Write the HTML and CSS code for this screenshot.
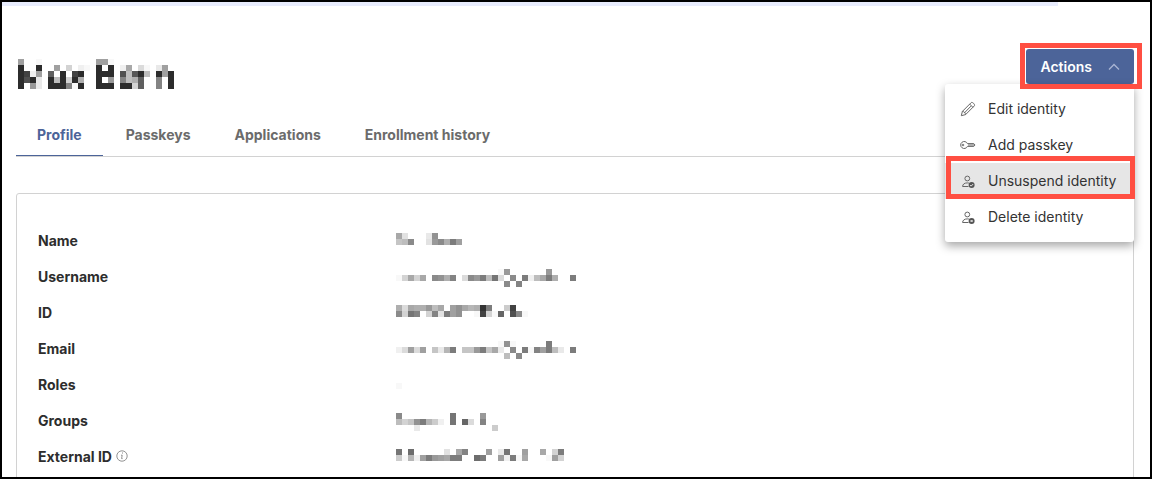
FILE: index.html
```html
<!DOCTYPE html>
<html lang="en">
<head>
<meta charset="utf-8">
<title>Identity profile</title>
<link rel="stylesheet" href="styles.css">
</head>
<body>
<div class="frame">
  <div class="strip"></div>
  <main class="page">
    <header class="head">
      <h1 class="title"><svg class="mosaic" role="img" aria-label="Redacted name" data-rows="mzzyzzzzzzzzzmmyzzzzzzzzzz 6zz6zzmztzxyz6z6zxnzuyzwmz 69xmzdz6z96zz666zbqc6qz6m6 6b6wz6q6t6ozz6zlziqodzziz6 6zlwz666iy6zz666z66tdzziz6"></svg></h1>
      <div class="actions">
        <button class="actions-button" type="button" aria-expanded="true" aria-controls="actions-menu">Actions
          <svg width="12" height="8" viewBox="0 0 12 8" fill="none" stroke="#a9b5d4" stroke-width="1.3"><path d="M1 6.5 6 1.5l5 5"/></svg>
        </button>
        <div class="menu" id="actions-menu">
          <button class="item" type="button">
            <svg width="16" height="16" viewBox="0 0 16 16" fill="none" stroke="#666" stroke-width="1"><path d="M1.3 14.7l1.1-4.3 8.7-8.7c1.2-1.2 4.4 1.9 3.2 3.2l-8.7 8.7zM2.4 10.4c1.8.2 3 1.4 3.2 3.2M9.7 3.1l3.2 3.2M4.3 12l6.7-6.9"/></svg>
            Edit identity</button>
          <button class="item" type="button">
            <svg width="16" height="16" viewBox="0 0 16 16" fill="none" stroke="#666" stroke-width="1"><path d="M7.4 6.6h6.4l1.2 1.4-1.2 1.4H7.4a3.5 3.5 0 1 1 0-2.8zM8 8h6"/><circle cx="3" cy="8" r=".8"/></svg>
            Add passkey</button>
          <button class="item item-current" type="button">
            <svg width="16" height="16" viewBox="0 0 16 16" fill="none" stroke="#666" stroke-width="1"><circle cx="7.3" cy="5.5" r="2.4"/><path d="M8.500 13.500H2.600c0-2.200 1.800-3.600 4.700-3.600 .8 0 1.400.1 2 .3"/><circle cx="11.600" cy="12" r="3" fill="#555" stroke="none"/><path d="M10.200 12.100l1 1 1.900-2" stroke="#fff" stroke-width=".9"/></svg>
            Unsuspend identity</button>
          <button class="item" type="button">
            <svg width="16" height="16" viewBox="0 0 16 16" fill="none" stroke="#666" stroke-width="1"><circle cx="7.3" cy="5.5" r="2.4"/><path d="M8.500 13.500H2.600c0-2.200 1.800-3.600 4.700-3.600 .8 0 1.400.1 2 .3"/><circle cx="11.600" cy="12" r="3" fill="#555" stroke="none"/><path d="M10.600 11l2 2m0-2l-2 2" stroke="#fff" stroke-width=".9"/></svg>
            Delete identity</button>
        </div>
      </div>
    </header>
    <nav class="tabs">
      <a class="tab tab-current" href="#profile">Profile</a>
      <a class="tab" href="#passkeys">Passkeys</a>
      <a class="tab" href="#applications">Applications</a>
      <a class="tab" href="#history">Enrollment history</a>
    </nav>
    <section class="card" id="profile">
      <dl class="fields">
        <dt>Name</dt>
        <dd><svg class="mosaic" role="img" aria-label="Redacted" data-rows="nvzzzwkzzzz rqjzzvljohm"></svg></dd>
        <dt>Username</dt>
        <dd><svg class="mosaic" role="img" aria-label="Redacted" data-rows="zzzzzzzzzzzzzzzzzylzzzzzzlzzzz ytntnzjkoizujlhqguzjzhxqnhozzh zzzzzzzzzzzzzzzzzzjzizzzzzzzzz"></svg></dd>
        <dt>ID</dt>
        <dd><svg class="mosaic" role="img" aria-label="Redacted" data-rows="ounoolqnzmknpo7hzzs9zz jtgiztivhmkzzy9tyezbjy"></svg></dd>
        <dt>Email</dt>
        <dd><svg class="mosaic" role="img" aria-label="Redacted" data-rows="zzzzzzzzzzzzzzzzzykyzzzzzhzzzz xumumzrwphzrrlhrnwzjzhyimhqwzh zzzzzzzzzzzzzzzzzzqzjzzzzzzzzz"></svg></dd>
        <dt>Roles</dt>
        <dd><svg class="mosaic" role="img" aria-label="Redacted" data-rows="z y"></svg></dd>
        <dt>Groups</dt>
        <dd><svg class="mosaic" role="img" aria-label="Redacted" data-rows="jzzzzzzzzgzzzzlzzz qtrkhpsxzgzeuzizzz zzzwzzzzzzzzzzzzsz"></svg></dd>
        <dt>External ID
          <svg width="12" height="12" viewBox="0 0 12 12" fill="none" stroke="#777" stroke-width=".8"><circle cx="6" cy="6" r="5.200"/><path d="M5 5.200h1.200L5.600 8.600h1"/><path d="M6 3h.9" stroke-width="1"/></svg></dt>
        <dd><svg class="mosaic" role="img" aria-label="Redacted" data-rows="gzfzzzzzvznizzzmzwgzzmzznzth sypxmhlmnhhzzfhzzmxhynzzzymtz"></svg></dd>
      </dl>
    </section>
  </main>
</div>
<script src="mosaic.js"></script>
</body>
</html>
```

FILE: styles.css
```css
* { box-sizing: border-box; }

body {
  margin: 0;
  font-family: Inter, "Liberation Sans", sans-serif;
  font-size: 14px;
  color: #2d2d2d;
  background: #fff;
}

.frame {
  height: 100vh;
  border: 2px solid #000;
  overflow: hidden;
}

.strip { width: 92%; height: 4px; background: #e8ecfd; }

.page { padding: 43px 16px 0 14px; }

.head {
  display: flex;
  justify-content: space-between;
  align-items: flex-start;
}

.title { margin: 10px 0 0 2px; line-height: 0; }

.mosaic { display: block; shape-rendering: crispEdges; }

.actions { position: relative; }

.actions-button {
  display: flex;
  align-items: center;
  gap: 16px;
  height: 35px;
  padding: 0 14px;
  border: 0;
  border-radius: 3px;
  background: #4c6499;
  color: #fff;
  font: 600 14px/20px Inter, sans-serif;
}

.actions::after,
.item-current::after {
  content: "";
  position: absolute;
  z-index: 3;
  border: 5px solid #ff4f42;
  pointer-events: none;
}

.actions::after { inset: -6px -8px -5px -6px; }

.menu {
  position: absolute;
  z-index: 2;
  top: 35px;
  right: 0;
  width: 189px;
  padding: 7px 0;
  border-radius: 3px;
  background: #fff;
  box-shadow: 0 4px 10px rgba(0, 0, 0, .35);
}

.item {
  position: relative;
  display: flex;
  align-items: center;
  gap: 12px;
  width: 100%;
  height: 36px;
  padding: 0 0 0 15px;
  border: 0;
  background: none;
  color: #333;
  font: 400 14px/20px Inter, sans-serif;
  white-space: nowrap;
}

.item-current { background: #e6e6e6; }
.item-current::after { inset: -7px -1px 0 1px; }

.tabs {
  display: flex;
  gap: 2px;
  margin-top: 24px;
  border-bottom: 1px solid #d2d2d2;
}

.tab {
  padding: 12px 21px 10px;
  border-bottom: 1px solid transparent;
  color: #6b6b6b;
  font-weight: 700;
  line-height: 20px;
  text-decoration: none;
}

.tab-current { color: #4c6499; border-color: #4c6499; }

.card {
  margin-top: 36px;
  padding: 28px 21px;
  border: 1px solid #d2d2d2;
  border-radius: 3px;
}

.fields {
  display: grid;
  grid-template-columns: 358px 1fr;
  grid-auto-rows: 36px;
  margin: 0;
}

.fields dt {
  display: flex;
  align-items: center;
  gap: 4px;
  font-weight: 700;
}

.fields dd { margin: 0; padding-top: 11px; }
```

FILE: mosaic.js
```js
// Draws each redacted value as a grid of grey cells.
// Rows are separated by spaces; each base-36 digit runs from 0 (black) to z (white).
const CELL = 6;

for (const svg of document.querySelectorAll(".mosaic")) {
  const rows = svg.dataset.rows.split(" ");
  svg.setAttribute("width", Math.max(...rows.map((row) => row.length)) * CELL);
  svg.setAttribute("height", rows.length * CELL);
  rows.forEach((row, y) => {
    [...row].forEach((digit, x) => {
      if (digit === "z") return;
      const level = Math.round(parseInt(digit, 36) * 255 / 35);
      const cell = document.createElementNS("http://www.w3.org/2000/svg", "rect");
      cell.setAttribute("x", x * CELL);
      cell.setAttribute("y", y * CELL);
      cell.setAttribute("width", CELL);
      cell.setAttribute("height", CELL);
      cell.setAttribute("fill", `rgb(${level}, ${level}, ${level})`);
      svg.append(cell);
    });
  });
}
```
